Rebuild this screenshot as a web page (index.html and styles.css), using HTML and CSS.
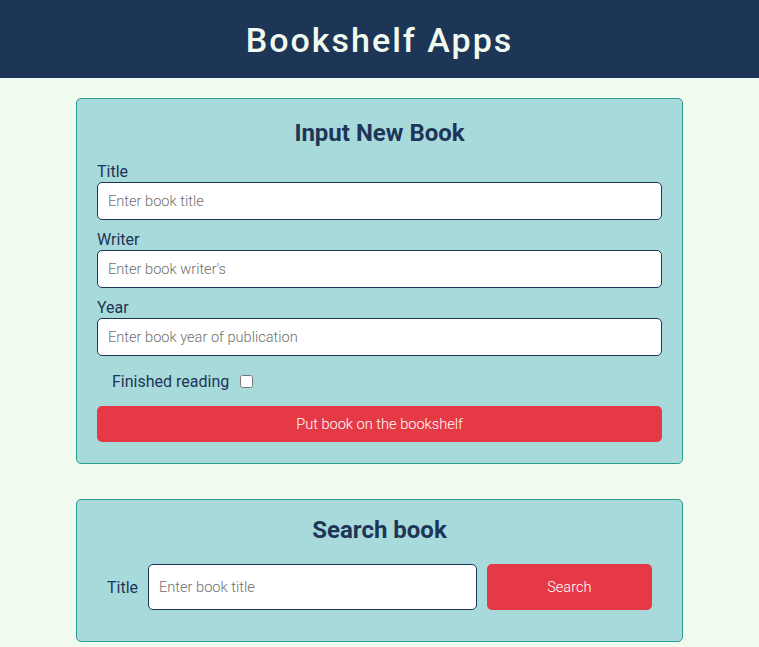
FILE: index.html
```html
<!DOCTYPE html>
<html lang="en">
<head>
<meta charset="utf-8">
<title>Bookshelf Apps</title>
<link rel="stylesheet" href="styles.css">
</head>
<body>
<header class="head-bar">
  <h1 class="head-title">Bookshelf Apps</h1>
</header>
<main class="main">
  <section class="card input-section">
    <h2 class="card-title">Input New Book</h2>
    <form class="book-form">
      <div class="field">
        <label class="field-label" for="inputTitle">Title</label>
        <input class="text-input" id="inputTitle" type="text" placeholder="Enter book title">
      </div>
      <div class="field">
        <label class="field-label" for="inputWriter">Writer</label>
        <input class="text-input" id="inputWriter" type="text" placeholder="Enter book writer's">
      </div>
      <div class="field">
        <label class="field-label" for="inputYear">Year</label>
        <input class="text-input" id="inputYear" type="text" placeholder="Enter book year of publication">
      </div>
      <div class="check-row">
        <label class="check-label" for="inputComplete">Finished reading</label>
        <input class="check-box" id="inputComplete" type="checkbox">
      </div>
      <button class="btn btn-submit" type="button">Put book on the bookshelf</button>
    </form>
  </section>
  <section class="card search-section">
    <h2 class="card-title search-title">Search book</h2>
    <form class="search-form">
      <label class="search-label" for="searchTitle">Title</label>
      <input class="text-input search-input" id="searchTitle" type="text" placeholder="Enter book title">
      <button class="btn btn-search" type="button">Search</button>
    </form>
  </section>
</main>
</body>
</html>
```
FILE: styles.css
```css
* { box-sizing: border-box; }
body {
  margin: 0;
  background: #f1faee;
  font-family: Roboto, "Open Sans", sans-serif;
  color: #1d3557;
}
.head-bar {
  background: #1d3557;
  height: 78px;
  display: flex;
  align-items: center;
  justify-content: center;
}
.head-title {
  margin: 0;
  color: #f1faee;
  font-size: 34px;
  font-weight: 500;
  letter-spacing: 2px;
  line-height: 40px;
  padding-top: 1px;
}
.main {
  width: 607px;
  margin: 20px auto 0;
}
.card {
  background: #a8dadc;
  border: 1px solid #2a9d8f;
  border-radius: 5px;
  padding: 0 20px 21px;
}
.card-title {
  margin: 21px 0 16px;
  text-align: center;
  font-size: 24px;
  font-weight: 700;
  line-height: 26px;
}
.field { margin-bottom: 10px; }
.field-label {
  display: block;
  font-size: 16px;
  line-height: 20px;
}
.text-input {
  display: block;
  width: 100%;
  height: 38px;
  border: 1px solid #1d3557;
  border-radius: 5px;
  background: #fff;
  padding: 0 10px;
  font-family: Roboto, sans-serif;
  font-size: 14.6px;
  font-weight: 300;
  color: #1d3557;
}
.text-input::placeholder { color: #6f6f6f; }
.check-row {
  display: flex;
  align-items: center;
  gap: 11px;
  height: 20px;
  margin: 15px 0 15px 15px;
}
.check-label { font-size: 16px; }
.check-box { margin: 0; width: 13px; height: 13px; }
.btn {
  display: block;
  border: 0;
  border-radius: 5px;
  background: #e63946;
  color: #fff;
  font-family: Roboto, sans-serif;
  font-size: 14.6px;
  font-weight: 300;
}
.btn-submit { width: 100%; height: 36px; }
.search-section { margin-top: 35px; padding-bottom: 31px; }
.search-title { margin: 17px 0 21px; }
.search-form {
  display: flex;
  align-items: center;
  gap: 10px;
  padding: 0 10px;
}
.search-label { font-size: 16px; }
.search-input { flex: 2; height: 46px; width: auto; }
.btn-search { flex: 1; height: 46px; }
```
